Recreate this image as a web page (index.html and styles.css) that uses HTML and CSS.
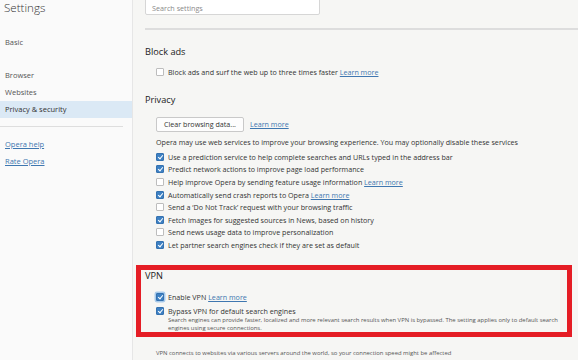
FILE: index.html
```html
<!DOCTYPE html>
<html>
<head>
<meta charset="utf-8">
<link rel="stylesheet" href="styles.css">
</head>
<body>
<div class="page">
  <aside class="sidebar">
    <h1 class="title">Settings</h1>
    <nav class="nav">
      <div class="nav-item basic">Basic</div>
      <div class="nav-item browser">Browser</div>
      <div class="nav-item">Websites</div>
      <div class="nav-item active">Privacy &amp; security</div>
    </nav>
    <div class="side-rule"></div>
    <div class="side-links">
      <a class="side-link">Opera help</a>
      <a class="side-link">Rate Opera</a>
    </div>
  </aside>
  <main class="main">
    <div class="search">Search settings</div>
    <div class="divider"></div>

    <section class="section">
      <h2 class="heading">Block ads</h2>
      <div class="rows first-rows">
        <div class="row"><span class="cb"></span><span>Block ads and surf the web up to three times faster <a class="link">Learn more</a></span></div>
      </div>
    </section>

    <section class="section privacy">
      <h2 class="heading">Privacy</h2>
      <div class="btn-line">
        <span class="btn">Clear browsing data...</span>
        <a class="link">Learn more</a>
      </div>
      <p class="note">Opera may use web services to improve your browsing experience. You may optionally disable these services</p>
      <div class="rows">
        <div class="row"><span class="cb on"></span><span>Use a prediction service to help complete searches and URLs typed in the address bar</span></div>
        <div class="row"><span class="cb on"></span><span>Predict network actions to improve page load performance</span></div>
        <div class="row"><span class="cb"></span><span>Help improve Opera by sending feature usage information <a class="link">Learn more</a></span></div>
        <div class="row"><span class="cb on"></span><span>Automatically send crash reports to Opera <a class="link">Learn more</a></span></div>
        <div class="row"><span class="cb"></span><span>Send a ‘Do Not Track’ request with your browsing traffic</span></div>
        <div class="row"><span class="cb on"></span><span>Fetch images for suggested sources in News, based on history</span></div>
        <div class="row"><span class="cb"></span><span>Send news usage data to improve personalization</span></div>
        <div class="row"><span class="cb on"></span><span>Let partner search engines check if they are set as default</span></div>
      </div>
    </section>

    <section class="vpn">
      <h2 class="heading vpn-heading">VPN</h2>
      <div class="vpn-rows">
        <div class="row vrow"><span class="cb on focus"></span><span>Enable VPN <a class="link">Learn more</a></span></div>
        <div class="row vrow"><span class="cb on"></span><span>Bypass VPN for default search engines</span></div>
        <p class="desc">Search engines can provide faster, localized and more relevant search results when VPN is bypassed. The setting applies only to default search engines using secure connections.</p>
      </div>
    </section>
    <p class="foot">VPN connects to websites via various servers around the world, so your connection speed might be affected</p>
  </main>
</div>
</body>
</html>
```
FILE: styles.css
```css
* { box-sizing: border-box; }
html, body { margin: 0; padding: 0; }
body {
  width: 578px;
  height: 360px;
  overflow: hidden;
  font-family: "Open Sans", "Noto Sans", sans-serif;
  color: #333;
  background: #f6f6f4;
}
.page { display: flex; height: 360px; }

.sidebar {
  width: 133px;
  flex: none;
  background: #fafafa;
  border-right: 1px solid #e6e6e6;
}
.title {
  margin: 0;
  padding-left: 4px;
  font-size: 11.6px;
  font-weight: 300;
  line-height: 15px;
  color: #333;
}
.nav { margin-top: 19px; font-size: 7.5px; color: #555; }
.nav-item { height: 17px; line-height: 17px; padding-left: 5px; }
.nav-item.browser { margin-top: 16px; }
.nav-item.active { background: #dbe9f5; color: #333; }
.side-rule { height: 1px; background: #dedede; width: 123px; margin-top: 8px; }
.side-links { margin-top: 9px; display: flex; flex-direction: column; }
.side-link {
  font-size: 7.5px;
  color: #3f77b0;
  text-decoration: underline;
  line-height: 17px;
  padding-left: 5px;
}

.main { flex: 1; padding-left: 12px; min-width: 0; }
.search {
  margin-top: -6px;
  width: 175px;
  height: 21px;
  border: 1px solid #d6d6d6;
  background: #fff;
  border-radius: 2px;
  font-size: 7.2px;
  color: #8a8a8a;
  padding: 6px 0 0 6px;
  line-height: 14px;
}
.divider { height: 2px; background: #dddddd; margin-top: 13px; }

.section { margin-top: 15px; }
.section.privacy { margin-top: 14px; }
.heading {
  margin: 0;
  font-size: 9.2px;
  font-weight: 400;
  line-height: 14px;
  color: #222;
}
.rows { display: flex; flex-direction: column; padding-left: 11px; margin-top: 3px; }
.first-rows { margin-top: 7px; }
.row {
  display: flex;
  align-items: center;
  height: 12.6px;
  font-size: 7.15px;
  color: #333;
  white-space: nowrap;
}
.cb {
  width: 8px;
  height: 8px;
  flex: none;
  margin-right: 4px;
  border: 1px solid #bdbdbd;
  background: #fff;
  border-radius: 1px;
  position: relative;
}
.cb.on { background: #3d80c3; border-color: #3572b0; }
.cb.on::after {
  content: "";
  position: absolute;
  left: 2px;
  top: 0px;
  width: 2px;
  height: 4px;
  border: solid #fff;
  border-width: 0 1.3px 1.3px 0;
  transform: rotate(40deg);
}
.cb.focus { box-shadow: 0 0 0 1.5px #a9cbeb; }
.link { color: #3f77b0; text-decoration: underline; }

.btn-line { display: flex; align-items: center; gap: 6px; padding-left: 11px; margin-top: 10px; }
.btn {
  display: inline-block;
  height: 15px;
  line-height: 13px;
  padding: 0 7px;
  font-size: 7.15px;
  background: #fdfdfd;
  border: 1px solid #c9c9c9;
  border-radius: 2px;
  color: #333;
}
.btn-line .link { font-size: 7.15px; }
.note { margin: 4px 0 0 11px; font-size: 7.15px; line-height: 12px; color: #333; white-space: nowrap; }

.vpn {
  margin: 14px 6px 0 -9px;
  border: 5px solid #e51d25;
  padding: 0 0 0 4px;
  height: 72px;
}
.vpn-heading { line-height: 12px; }
.vpn-rows { padding-left: 11px; margin-top: 8px; }
.vrow { height: 13.5px; }
.desc {
  margin: 0 0 0 12px;
  font-size: 5.9px;
  line-height: 7.8px;
  color: #555;
}
.foot {
  margin: 12px 0 0 11px;
  font-size: 5.9px;
  line-height: 8px;
  color: #555;
  white-space: nowrap;
}
```
